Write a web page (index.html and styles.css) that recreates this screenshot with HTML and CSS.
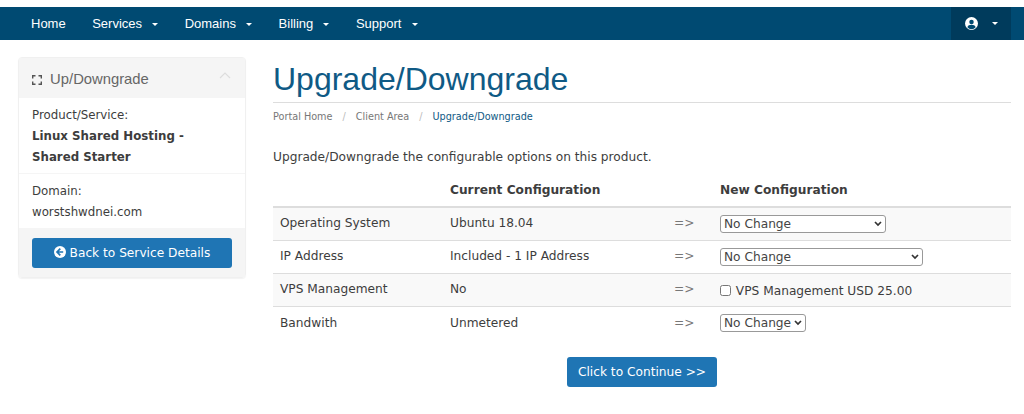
FILE: index.html
```html
<!DOCTYPE html>
<html lang="en">
<head>
    <meta charset="UTF-8">
    <meta name="viewport" content="width=device-width, initial-scale=1.0">
    <title>Upgrade/Downgrade</title>
    <link rel="stylesheet" href="styles.css">
</head>
<body>

<header class="navbar">
    <ul class="nav-links">
        <li><a href="#">Home</a></li>
        <li><a href="#">Services <span class="caret"></span></a></li>
        <li><a href="#">Domains <span class="caret"></span></a></li>
        <li><a href="#">Billing <span class="caret"></span></a></li>
        <li><a href="#">Support <span class="caret"></span></a></li>
    </ul>
    <a href="#" class="user-menu">
        <svg class="user-icon" viewBox="0 0 16 16" width="13" height="13">
            <circle cx="8" cy="8" r="8" fill="#fff"/>
            <circle cx="8" cy="6.2" r="2.8" fill="#004a72"/>
            <path d="M2.9 12.6c.7-2 2.6-3 5.1-3s4.400 1 5.100 3A7 7 0 0 1 8 15a7 7 0 0 1-5.100-2.400z" fill="#004a72"/>
        </svg>
        <span class="caret"></span>
    </a>
</header>

<div class="page">
    <aside class="sidebar">
        <div class="panel">
            <div class="panel-heading">
                <h3 class="panel-title">
                    <svg class="expand-icon" viewBox="0 0 10 10" width="10" height="10">
                        <path d="M.7 3.500V.7h2.800M6.500.7h2.800v2.800M9.300 6.500v2.800H6.500M3.500 9.300H.7V6.500" fill="none" stroke="#555" stroke-width="1.400"/>
                    </svg>
                    Up/Downgrade
                </h3>
                <svg class="collapse-icon" viewBox="0 0 12 7" width="12" height="7">
                    <path d="M1 6l5-5 5 5" fill="none" stroke="#ddd" stroke-width="1.200"/>
                </svg>
            </div>
            <div class="panel-item">
                <div>Product/Service:</div>
                <strong>Linux Shared Hosting - Shared Starter</strong>
            </div>
            <div class="panel-item">
                <div>Domain:</div>
                <div>worstshwdnei.com</div>
            </div>
            <div class="panel-footer">
                <a href="#" class="btn btn-block">
                    <svg class="back-icon" viewBox="0 0 12 12" width="12" height="12">
                        <circle cx="6" cy="6" r="6" fill="#fff"/>
                        <path d="M6.300 2.600L3 6l3.300 3.400M3.400 6h5.800" fill="none" stroke="#1f75b4" stroke-width="1.700"/>
                    </svg>
                    Back to Service Details
                </a>
            </div>
        </div>
    </aside>

    <main class="content">
        <h1 class="page-title">Upgrade/Downgrade</h1>
        <ol class="breadcrumb">
            <li><a href="#">Portal Home</a></li>
            <li><a href="#">Client Area</a></li>
            <li class="active"><a href="#">Upgrade/Downgrade</a></li>
        </ol>

        <p class="intro">Upgrade/Downgrade the configurable options on this product.</p>

        <table class="config-table">
            <thead>
                <tr>
                    <th class="col-name"></th>
                    <th class="col-current">Current Configuration</th>
                    <th class="col-arrow"></th>
                    <th>New Configuration</th>
                </tr>
            </thead>
            <tbody>
                <tr>
                    <td>Operating System</td>
                    <td>Ubuntu 18.04</td>
                    <td class="arrow">=&gt;</td>
                    <td><select class="select-os"><option>No Change</option></select></td>
                </tr>
                <tr>
                    <td>IP Address</td>
                    <td>Included - 1 IP Address</td>
                    <td class="arrow">=&gt;</td>
                    <td><select class="select-ip"><option>No Change</option></select></td>
                </tr>
                <tr>
                    <td>VPS Management</td>
                    <td>No</td>
                    <td class="arrow">=&gt;</td>
                    <td><label class="check"><input type="checkbox"> VPS Management USD 25.00</label></td>
                </tr>
                <tr>
                    <td>Bandwith</td>
                    <td>Unmetered</td>
                    <td class="arrow">=&gt;</td>
                    <td><select class="select-band"><option>No Change</option></select></td>
                </tr>
            </tbody>
        </table>

        <div class="actions">
            <a href="#" class="btn">Click to Continue &gt;&gt;</a>
        </div>
    </main>
</div>

</body>
</html>
```

FILE: styles.css
```css
* {
    margin: 0;
    padding: 0;
    box-sizing: border-box;
}

body {
    font-family: "DejaVu Sans", Verdana, sans-serif;
    font-size: 12.2px;
    line-height: 21px;
    color: #3d3d3d;
    background-color: #fff;
    padding-top: 7px;
}

a {
    text-decoration: none;
}

.navbar {
    display: flex;
    justify-content: space-between;
    height: 33px;
    padding: 0 13px 0 31px;
    background-color: #004a72;
    font-family: "Liberation Sans", Arial, sans-serif;
    font-size: 13px;
}

.nav-links {
    list-style: none;
    display: flex;
    gap: 26.500px;
}

.nav-links a {
    color: #fff;
    line-height: 33px;
}

.caret {
    display: inline-block;
    width: 0;
    height: 0;
    margin-left: 6.500px;
    vertical-align: middle;
    border-top: 3px solid #fff;
    border-left: 3.500px solid transparent;
    border-right: 3.500px solid transparent;
}

.user-menu {
    display: flex;
    align-items: center;
    gap: 14px;
    width: 60px;
    padding-left: 14px;
    background-color: #003b5c;
}

.user-menu .caret {
    margin-left: 0;
}

.page {
    display: flex;
    padding: 17px 13px 0 18px;
}

.sidebar {
    width: 228px;
    flex-shrink: 0;
    margin-right: 27px;
}

.panel {
    border: 1px solid #f0f0f0;
    border-radius: 4px;
    box-shadow: 0 1px 1px rgba(0, 0, 0, 0.05);
}

.panel-heading {
    display: flex;
    justify-content: space-between;
    align-items: center;
    height: 40px;
    padding: 2px 14px 0 13px;
    background-color: #f5f5f5;
}

.panel-title {
    font-family: "Liberation Sans", Arial, sans-serif;
    font-size: 14.8px;
    font-weight: normal;
    color: #666;
}

.expand-icon {
    margin-right: 4px;
    vertical-align: -1px;
}

.collapse-icon {
    margin-top: -8px;
}

.panel-item {
    padding: 7px 13px 5px;
    font-size: 11.8px;
    border-bottom: 1px solid #f5f5f5;
}

.panel-item:last-of-type {
    padding-top: 8px;
    padding-bottom: 4px;
    border-bottom: none;
}

.panel-footer {
    padding: 9px 13px 9px;
    background-color: #f5f5f5;
}

.btn {
    display: inline-block;
    height: 30px;
    padding: 0 11px;
    line-height: 31px;
    color: #fff;
    background-color: #1f75b4;
    border-radius: 3px;
}

.btn-block {
    display: block;
    text-align: center;
    padding: 0;
}

.back-icon {
    vertical-align: -1px;
}

.content {
    flex: 1;
    min-width: 0;
}

.page-title {
    font-family: "Liberation Sans", Arial, sans-serif;
    font-size: 32px;
    font-weight: normal;
    line-height: 38px;
    color: #0f5a85;
    padding-top: 3px;
    padding-bottom: 4px;
    border-bottom: 1px solid #ddd;
}

.breadcrumb {
    list-style: none;
    display: flex;
    font-size: 9.7px;
    line-height: 14px;
    padding-top: 7px;
}

.breadcrumb a {
    color: #777;
}

.breadcrumb li + li::before {
    content: "/";
    color: #bbb;
    padding: 0 10px;
}

.breadcrumb .active a {
    color: #0f5a85;
}

.intro {
    margin-top: 23px;
    margin-bottom: 8px;
}

.config-table {
    width: 100%;
    border-collapse: collapse;
    table-layout: fixed;
}

.config-table th {
    text-align: left;
    padding: 4px 7px 5px;
    border-bottom: 2px solid #ddd;
}

.col-name {
    width: 170px;
}

.col-current {
    width: 224px;
}

.col-arrow {
    width: 46px;
}

.config-table td {
    height: 33px;
    padding: 0 7px;
    border-bottom: 1px solid #ddd;
    vertical-align: middle;
}

.config-table tbody tr:nth-child(odd) {
    background-color: #f9f9f9;
}

.config-table tbody tr:last-child td {
    height: 34px;
    border-bottom: none;
}

.arrow {
    color: #777;
}

select {
    display: block;
    height: 18px;
    padding-left: 3px;
    font-family: inherit;
    font-size: 12.2px;
    color: #444;
    appearance: none;
    background: #fff url("data:image/svg+xml,%3Csvg xmlns='http://www.w3.org/2000/svg' width='8' height='6'%3E%3Cpath d='M1 1l3 3 3-3' fill='none' stroke='%23333' stroke-width='1.700'/%3E%3C/svg%3E") no-repeat right 3px center;
    border: 1px solid #999;
    border-radius: 3px;
}

.select-os {
    width: 166px;
}

.select-ip {
    width: 203px;
}

.select-band {
    width: 86px;
}

.check {
    display: block;
    padding-top: 4px;
}

.check input {
    width: 11px;
    height: 11px;
    margin-right: 1px;
    vertical-align: -1px;
}

.actions {
    text-align: center;
    margin-top: 17px;
}
```
